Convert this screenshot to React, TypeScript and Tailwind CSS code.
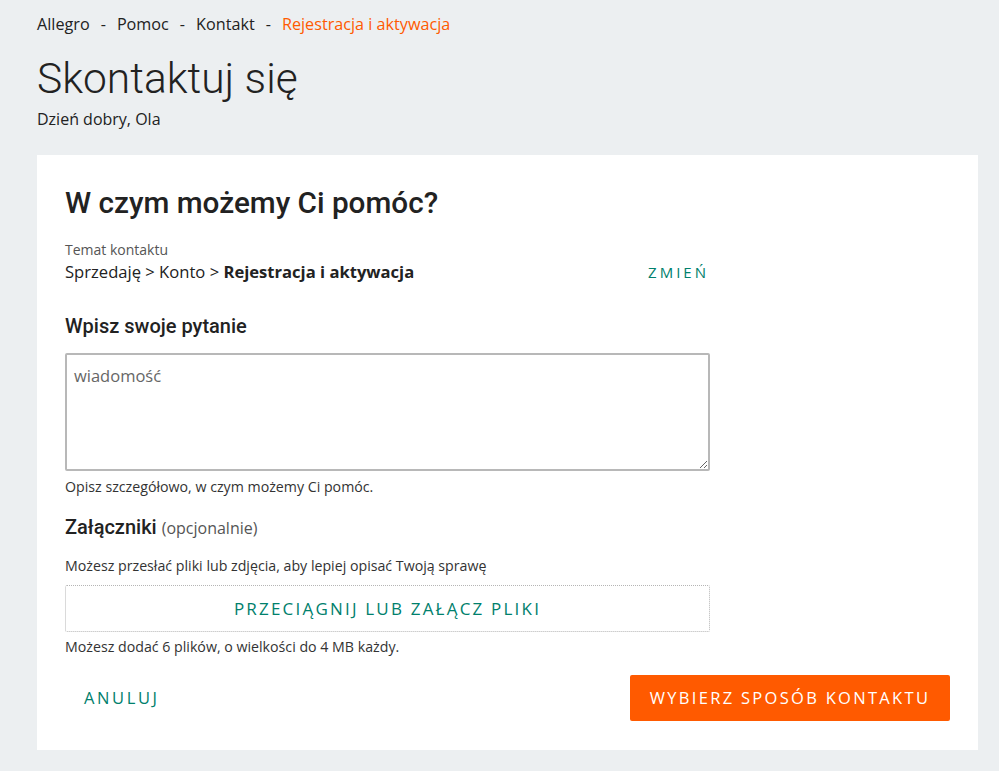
import React from "react";

const os = { fontFamily: '"Open Sans", "Noto Sans", sans-serif' };
const rb = { fontFamily: 'Roboto, "Noto Sans", sans-serif' };

export default function App() {
  return (
    <div className="min-h-[771px] w-full bg-[#eceff1] text-[#222]" style={os}>
      <div className="pl-[37px] pr-[21px]">
        <nav className="flex items-center pt-[13px] text-[16.2px] leading-[22px] text-[#222]">
          <span>Allegro</span>
          <span className="mx-[11px]">-</span>
          <span>Pomoc</span>
          <span className="mx-[11px]">-</span>
          <span>Kontakt</span>
          <span className="mx-[11px]">-</span>
          <span className="text-[#ff5a00]">Rejestracja i aktywacja</span>
        </nav>
        <h1 className="mt-[27px] text-[42.5px] font-light leading-[34px] text-[#222]" style={rb}>
          Skontaktuj się
        </h1>
        <p className="mt-[12px] text-[16px] leading-[22px]">Dzień dobry, Ola</p>

        <div className="mt-[25px] bg-white pl-[28px] pr-[28px] pt-[31px] pb-[29px]">
          <div className="w-[645px]">
            <h2 className="text-[29.7px] font-medium leading-[34px] text-[#222]" style={rb}>
              W czym możemy Ci pomóc?
            </h2>
            <div className="mt-[21px] text-[14px] leading-[18px] text-[#555]">Temat kontaktu</div>
            <div className="mt-[2px] flex items-center justify-between text-[16.6px] leading-[22px]">
              <span>
                Sprzedaję &gt; Konto &gt; <b className="font-bold">Rejestracja i aktywacja</b>
              </span>
              <button className="mr-[1px] text-[15px] tracking-[3px] text-[#00806c]">ZMIEŃ</button>
            </div>
            <h3 className="mt-[31px] text-[20px] font-medium leading-[24px]" style={rb}>
              Wpisz swoje pytanie
            </h3>
            <textarea
              className="mt-[15px] block h-[118px] w-[645px] rounded-[2px] border-2 border-[#b8b8b8] px-[7px] py-[10px] text-[16.5px] leading-[22px] text-[#222] placeholder:text-[#666]"
              style={os}
              placeholder="wiadomość"
            />
            <p className="mt-[6px] text-[14.2px] leading-[20px] text-[#333]">
              Opisz szczegółowo, w czym możemy Ci pomóc.
            </p>
            <div className="mt-[18px] flex items-baseline gap-[5px]">
              <span className="text-[20px] font-medium leading-[24px]" style={rb}>
                Załączniki
              </span>
              <span className="text-[16px] text-[#555]">(opcjonalnie)</span>
            </div>
            <p className="mt-[16px] text-[14.2px] leading-[20px] text-[#333]">
              Możesz przesłać pliki lub zdjęcia, aby lepiej opisać Twoją sprawę
            </p>
            <div className="mt-[9px] flex h-[47px] items-center justify-center rounded-[2px] border border-dotted border-[#b5b5b5] text-[17px] tracking-[2.2px] text-[#00806c]">
              PRZECIĄGNIJ LUB ZAŁĄCZ PLIKI
            </div>
            <p className="mt-[5px] text-[14.2px] leading-[20px] text-[#333]">
              Możesz dodać 6 plików, o wielkości do 4 MB każdy.
            </p>
          </div>
          <div className="mt-[18px] flex items-center justify-between">
            <button className="ml-[19px] text-[16.5px] tracking-[2.6px] text-[#00806c]">ANULUJ</button>
            <button className="h-[46px] w-[320px] rounded-[2px] bg-[#ff5a00] text-[16.5px] tracking-[2.3px] text-white">
              WYBIERZ SPOSÓB KONTAKTU
            </button>
          </div>
        </div>
      </div>
    </div>
  );
}
